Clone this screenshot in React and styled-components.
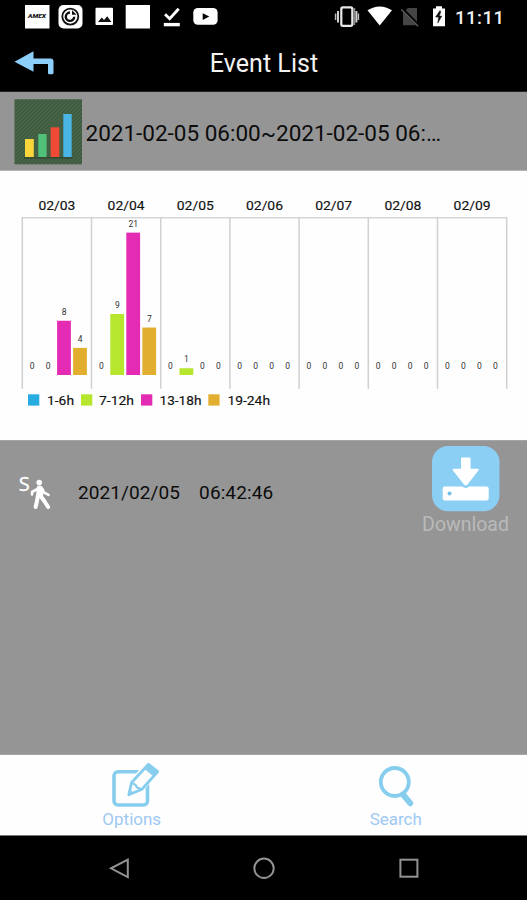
import React from 'react';
import styled, { createGlobalStyle } from 'styled-components';

const GlobalStyle = createGlobalStyle`
  * { box-sizing: border-box; }
  body { margin: 0; background: #000; font-family: Roboto, "Liberation Sans", sans-serif; }
  svg { display: block; flex: none; }
`;

const Screen = styled.div`
  display: flex;
  flex-direction: column;
  width: 527px;
  height: 900px;
  overflow: hidden;
  background: #959595;
`;

const StatusBar = styled.div`
  height: 33px;
  flex: none;
  background: #000;
  display: flex;
  justify-content: space-between;
`;

const TitleBar = styled.header`
  height: 59px;
  flex: none;
  background: #000;
  display: grid;
  grid-template-columns: 80px 1fr 80px;
  border-bottom: 1px solid #222;
`;

const Title = styled.h1`
  margin: 0;
  padding-left: 1px;
  text-align: center;
  font-size: 25px;
  line-height: 62px;
  font-weight: 400;
  letter-spacing: 0.05px;
  color: #f2f2f2;
`;

const RangeBar = styled.div`
  height: 79px;
  flex: none;
  display: flex;
  align-items: center;
  padding: 1px 0 0 14px;
  gap: 3.5px;
  border-bottom: 1px solid #b4b4b4;
`;

const RangeText = styled.div`
  padding-top: 2px;
  font-size: 22.5px;
  line-height: 30px;
  color: #0c0c0c;
  white-space: nowrap;
`;

const ChartPanel = styled.section`
  height: 269px;
  flex: none;
  background: #fefefe;
`;

const EventRow = styled.div`
  height: 314px;
  flex: none;
  display: flex;
  align-items: flex-start;
  border-top: 1px solid #a5a5a5;
`;

const EventTime = styled.div`
  display: flex;
  gap: 19px;
  width: 344px;
  padding-top: 39px;
  font-size: 19px;
  line-height: 26px;
  letter-spacing: 0.1px;
  color: #0c0c0c;
  white-space: nowrap;
`;

const DownloadButton = styled.button`
  all: unset;
  display: flex;
  flex-direction: column;
  align-items: center;
  width: 87px;
  padding-top: 5px;
  font-size: 19.5px;
  line-height: 26px;
  color: #bababa;
`;

const ActionBar = styled.nav`
  height: 82px;
  flex: none;
  display: grid;
  grid-template-columns: 1fr 1fr;
  background: #fefefe;
  border-top: 1px solid #a5a5a5;
  border-bottom: 1px solid #777;
`;

const Action = styled.button`
  all: unset;
  display: flex;
  flex-direction: column;
  align-items: center;
  padding: 7px 0 0 ${(p) => p.$shift}px;
  font-size: 17px;
  line-height: 20px;
  color: #9fc9f3;
`;

const SystemNav = styled.div`
  height: 64px;
  flex: none;
  background: #000;
`;

const DAYS = [
  ['02/03', [0, 0, 8, 4]],
  ['02/04', [0, 9, 21, 7]],
  ['02/05', [0, 1, 0, 0]],
  ['02/06', [0, 0, 0, 0]],
  ['02/07', [0, 0, 0, 0]],
  ['02/08', [0, 0, 0, 0]],
  ['02/09', [0, 0, 0, 0]],
];
const SERIES = [
  { name: '1-6h', color: '#27ace2', x: 28, tx: 47, w: 27 },
  { name: '7-12h', color: '#b6e62e', x: 81, tx: 99, w: 35 },
  { name: '13-18h', color: '#e42bb3', x: 141, tx: 159.5, w: 42 },
  { name: '19-24h', color: '#e2ae30', x: 208.3, tx: 227.5, w: 42.5 },
];
const LEFT = 22.3;
const COL = 69.2;
const UNIT = 6.78;
const BASE = 204;

function EventChart() {
  return (
    <svg width="527" height="269" viewBox="0 0 527 269">
      <path d="M22 46.8H507" stroke="#d6d6d6" strokeWidth="1.6" />
      {Array.from({ length: 8 }, (_, i) => (
        <path key={i} d={`M${LEFT + COL * i} 46V217.8`} stroke="#d0d0d0" strokeWidth="1.5" />
      ))}
      {DAYS.map(([day, values], d) => (
        <g key={day} textAnchor="middle">
          <text
            x={LEFT + COL * (d + 0.5)}
            y="38.6"
            fontSize="13.2"
            fill="#111"
            stroke="#111"
            strokeWidth="0.15"
            textLength="37"
            lengthAdjust="spacingAndGlyphs"
          >
            {day}
          </text>
          {values.map((value, s) => {
            const x = LEFT + COL * d + 2.8 + s * 16;
            const h = value * UNIT;
            return (
              <g key={s}>
                {value > 0 && <rect x={x} y={BASE - h} width="13.8" height={h} fill={SERIES[s].color} />}
                <text x={x + 7} y={BASE - h - 6} fontSize="8.5" fill="#333">
                  {value}
                </text>
              </g>
            );
          })}
        </g>
      ))}
      {SERIES.map((s) => (
        <g key={s.name}>
          <rect x={s.x} y="223.3" width="11.3" height="11.3" fill={s.color} />
          <text
            x={s.tx}
            y="234.3"
            fontSize="13.2"
            fill="#111"
            stroke="#111"
            strokeWidth="0.15"
            textLength={s.w}
            lengthAdjust="spacingAndGlyphs"
          >
            {s.name}
          </text>
        </g>
      ))}
    </svg>
  );
}

const StatusLeft = () => (
  <svg width="240" height="33" viewBox="0 0 240 33">
    <rect x="25" y="5" width="24.5" height="23.5" fill="#fff" />
    <text x="28" y="18.2" fontSize="5.5" fontWeight="900" fontStyle="italic" fill="#111" textLength="18" lengthAdjust="spacingAndGlyphs">AMEX</text>
    <rect x="58.5" y="5" width="24" height="23.5" rx="5" fill="#fff" />
    <circle cx="70.3" cy="16.6" r="8" fill="none" stroke="#111" strokeWidth="1.8" />
    <path d="M70 12.5a4.2 4.2 0 1 0 4.2 4.2" fill="none" stroke="#111" strokeWidth="2.4" />
    <path d="M72 10.2v4.6h4.6z" fill="#111" />
    <rect x="95.5" y="7.7" width="17.5" height="17.3" rx="1" fill="#fff" />
    <path d="M98 22l3.7-4.5 2.3 2.6 3.2-3.8 4.2 5.7z" fill="#111" />
    <rect x="125.7" y="5" width="24.3" height="23.5" fill="#fff" />
    <path d="M165 14.2l4.7 4.5 9-10" fill="none" stroke="#fff" strokeWidth="2.8" />
    <path d="M163.8 24.6h16" stroke="#fff" strokeWidth="3.4" />
    <rect x="193.3" y="8" width="24.3" height="16.8" rx="4.5" fill="#fff" />
    <path d="M202.7 13.2v6.8l6.6-3.4z" fill="#000" />
  </svg>
);

const StatusRight = () => (
  <svg width="207" height="33" viewBox="320 0 207 33">
    <rect x="341.3" y="7.4" width="11" height="18.4" rx="1.5" fill="none" stroke="#e8e8e8" strokeWidth="2.2" />
    <path d="M354.2 8v17" stroke="#8a8a8a" strokeWidth="2" />
    <path d="M338 11v11.5M356.4 11v11.5" stroke="#cfcfcf" strokeWidth="2" />
    <path d="M335.6 13.5v6.5M358.4 13.5v6.5" stroke="#bbb" strokeWidth="1.5" />
    <path d="M367.5 10.3Q379.7 2.7 392 10.3L379.7 25.5z" fill="#fff" />
    <path d="M408 8h9v17.3h-14V12.5z" fill="#454545" />
    <path d="M402 8.7l17 17.3" stroke="#000" strokeWidth="3.2" />
    <path d="M401.3 9.5l16.8 16.8" stroke="#5c5c5c" strokeWidth="1.5" />
    <path d="M433 8.5h3V6.3h6v2.2h3v17.8h-12z" fill="#fff" />
    <path d="M440 10.5l-4.4 6.6h3l-.8 6 4-7h-2.6l1.6-4z" fill="#111" stroke="#111" strokeWidth=".5" />
    <text x="455" y="24.3" fontSize="18.6" fontWeight="500" fill="#f2f2f2" textLength="49">11:11</text>
  </svg>
);

const BackIcon = () => (
  <svg width="80" height="58" viewBox="0 33 80 58">
    <path d="M14.5 61.8L33.5 51.3V58.5H50.5Q53.5 58.5 53.5 61.5V72.8Q53.5 74.3 52 74.3H49Q48 74.3 48 72.8V64H33.5V71.8z" fill="#8bcffa" />
  </svg>
);

const ChartIcon = () => (
  <svg width="68" height="66" viewBox="0 0 68 66">
    <defs>
      <pattern id="hatch" width="4" height="4" patternUnits="userSpaceOnUse">
        <path d="M-1 5L5 -1" stroke="#4e694f" strokeWidth="0.8" />
      </pattern>
    </defs>
    <rect x="0.5" y="0.3" width="67.5" height="65" fill="#405d41" />
    <rect x="0.5" y="0.3" width="67.5" height="65" fill="url(#hatch)" />
    <path d="M10 58.8H58.5" stroke="#344b35" strokeWidth="2" />
    <rect x="11" y="40" width="8.8" height="18" fill="#fad63a" />
    <rect x="24.3" y="35" width="8.3" height="23" fill="#4fc178" />
    <rect x="36.7" y="28.3" width="8.6" height="29.7" fill="#f04936" />
    <rect x="49.3" y="15" width="8.4" height="43" fill="#48b5e4" />
  </svg>
);

const WalkIcon = () => (
  <svg width="78" height="80" viewBox="0 441 78 80">
    <text x="18.8" y="491" fontSize="20" fontFamily="'Open Sans', sans-serif" fill="#fff" stroke="#fff" strokeWidth="0.3" textLength="11" lengthAdjust="spacingAndGlyphs">S</text>
    <circle cx="39.2" cy="482.6" r="2.8" fill="#fff" />
    <path d="M38.5 488.5L32 492v2.5M42 488.5l2.2 4.2 4.3 2.2" fill="none" stroke="#fff" strokeWidth="2.6" strokeLinecap="round" strokeLinejoin="round" />
    <path d="M37.5 486.3h4l2 3-1.2 8h-5.8z" fill="#fff" stroke="#fff" strokeLinejoin="round" />
    <path d="M38 495l-1 6-1.4 6M40.6 496l3.7 5 3.8 6" fill="none" stroke="#fff" strokeWidth="4" strokeLinecap="round" strokeLinejoin="round" />
  </svg>
);

const DownloadIcon = () => (
  <svg width="68" height="66" viewBox="0 0 68 66">
    <rect x="0" y="0" width="67.5" height="65.3" rx="16" fill="#8bcff5" />
    <path d="M12.5 40.5H54.5Q56.7 40.5 56.7 42.7V52.3Q56.7 54.5 54.5 54.5H12.8Q10.7 54.5 10.7 52.3V42.7Q10.7 40.5 12.5 40.5z" fill="#fff" />
    <path d="M29 12.5Q29 11.5 30 11.5H37.4Q38.6 11.5 38.6 12.7V22.7H45.3Q48 22.7 46 25L35.5 38.5Q33.8 40.5 32 38.5L21.3 25Q19.5 22.7 22.2 22.7H29z" fill="#fff" stroke="#8bcff5" strokeWidth="5" paintOrder="stroke" strokeLinejoin="round" />
    <circle cx="17.5" cy="47.4" r="2" fill="#72bfe8" />
  </svg>
);

const OptionsIcon = () => (
  <svg width="54" height="47" viewBox="105 762 54 47">
    <rect x="114" y="771.8" width="33.5" height="33.2" rx="4" fill="none" stroke="#87cdee" strokeWidth="3.6" />
    <path d="M129 795l2.5-14L146 763l12 10-15 16.5z" fill="#fefefe" stroke="#fefefe" strokeWidth="2" />
    <path d="M128.8 794.8l2.8-12.3L148.5 764.3 157.8 771.6 142 789.2z" fill="#fefefe" stroke="#87cdee" strokeWidth="2.8" strokeLinejoin="round" />
    <path d="M144.5 768.5l4-4.2 9.3 7.3-4 4.5z" fill="#87cdee" stroke="#87cdee" />
    <path d="M131.6 782.5l4 2.5 1.5 2.5 4.9 1.7" fill="none" stroke="#87cdee" strokeWidth="2.2" />
    <path d="M128.3 795.8l1.6-6.2 4 4z" fill="#87cdee" />
  </svg>
);

const SearchIcon = () => (
  <svg width="50" height="47" viewBox="371 762 50 47">
    <circle cx="394.8" cy="782" r="14" fill="none" stroke="#87cdee" strokeWidth="3.8" />
    <path d="M403 794.5l7.2 8.7" stroke="#87cdee" strokeWidth="6" strokeLinecap="round" />
  </svg>
);

const NavIcons = () => (
  <svg width="527" height="64" viewBox="0 836 527 64" fill="none" stroke="#929292" strokeWidth="2">
    <path d="M127.8 859.6v17.5L111 868.3z" />
    <circle cx="264" cy="868.3" r="9.7" />
    <rect x="400.4" y="859.7" width="17" height="17" />
  </svg>
);

export default function App() {
  return (
    <>
      <GlobalStyle />
      <Screen>
        <StatusBar>
          <StatusLeft />
          <StatusRight />
        </StatusBar>
        <TitleBar>
          <BackIcon />
          <Title>Event List</Title>
        </TitleBar>
        <RangeBar>
          <ChartIcon />
          <RangeText>2021-02-05 06:00~2021-02-05 06:…</RangeText>
        </RangeBar>
        <ChartPanel>
          <EventChart />
        </ChartPanel>
        <EventRow>
          <WalkIcon />
          <EventTime>
            <span>2021/02/05</span>
            <span>06:42:46</span>
          </EventTime>
          <DownloadButton>
            <DownloadIcon />
            Download
          </DownloadButton>
        </EventRow>
        <ActionBar>
          <Action $shift={0}>
            <OptionsIcon />
            Options
          </Action>
          <Action $shift={1}>
            <SearchIcon />
            Search
          </Action>
        </ActionBar>
        <SystemNav>
          <NavIcons />
        </SystemNav>
      </Screen>
    </>
  );
}
